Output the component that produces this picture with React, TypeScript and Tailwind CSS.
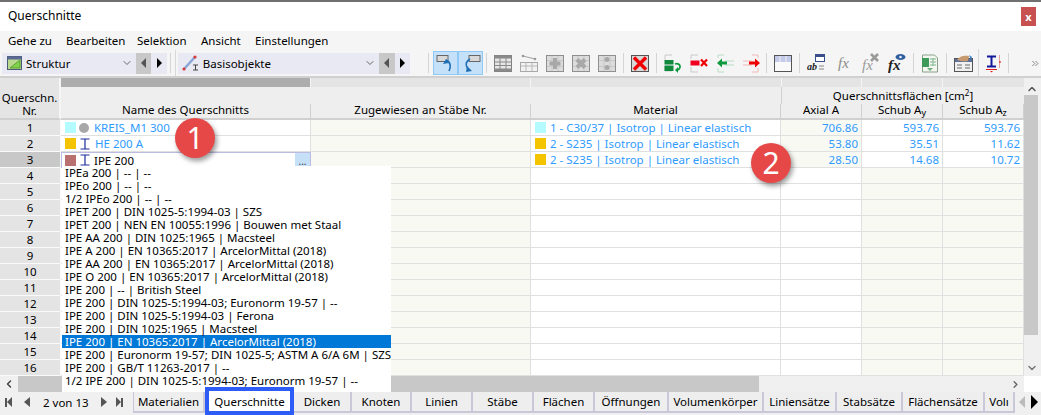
import type { ReactNode } from "react";
import { ChevronDown, ChevronUp, ChevronLeft, ChevronRight, ChevronsRight } from "lucide-react";

const font = { fontFamily: '"Noto Sans", "Open Sans", sans-serif' };

const rows = [
  { nr: 1, name: "KREIS_M1 300", color: "bg-[#b3fbff]", shape: "circle", mat: "1 - C30/37 | Isotrop | Linear elastisch", matColor: "bg-[#b3fbff]", a: "706.86", ay: "593.76", az: "593.76" },
  { nr: 2, name: "HE 200 A", color: "bg-[#f5c400]", shape: "beam", mat: "2 - S235 | Isotrop | Linear elastisch", matColor: "bg-[#f5c400]", a: "53.80", ay: "35.51", az: "11.62" },
  { nr: 3, name: "IPE 200", color: "bg-[#b87070]", shape: "beam", mat: "2 - S235 | Isotrop | Linear elastisch", matColor: "bg-[#f5c400]", a: "28.50", ay: "14.68", az: "10.72" },
];

const dropdownItems = [
  "IPEa 200 | -- | --",
  "IPEo 200 | -- | --",
  "1/2 IPEo 200 | -- | --",
  "IPET 200 | DIN 1025-5:1994-03 | SZS",
  "IPET 200 | NEN EN 10055:1996 | Bouwen met Staal",
  "IPE AA 200 | DIN 1025:1965 | Macsteel",
  "IPE A 200 | EN 10365:2017 | ArcelorMittal (2018)",
  "IPE AA 200 | EN 10365:2017 | ArcelorMittal (2018)",
  "IPE O 200 | EN 10365:2017 | ArcelorMittal (2018)",
  "IPE 200 | -- | British Steel",
  "IPE 200 | DIN 1025-5:1994-03; Euronorm 19-57 | --",
  "IPE 200 | DIN 1025-5:1994-03 | Ferona",
  "IPE 200 | DIN 1025:1965 | Macsteel",
  "IPE 200 | EN 10365:2017 | ArcelorMittal (2018)",
  "IPE 200 | Euronorm 19-57; DIN 1025-5; ASTM A 6/A 6M | SZS",
  "IPE 200 | GB/T 11263-2017 | --",
  "1/2 IPE 200 | DIN 1025-5:1994-03; Euronorm 19-57 | --",
];

const tabs = [
  { label: "Materialien", w: "w-[72px]" },
  { label: "Querschnitte", w: "w-[89px]", active: true },
  { label: "Dicken", w: "w-[58px]" },
  { label: "Knoten", w: "w-[60px]" },
  { label: "Linien", w: "w-[61px]" },
  { label: "Stäbe", w: "w-[61px]" },
  { label: "Flächen", w: "w-[61px]" },
  { label: "Öffnungen", w: "w-[74px]" },
  { label: "Volumenkörper", w: "w-[95px]" },
  { label: "Liniensätze", w: "w-[73px]" },
  { label: "Stabsätze", w: "w-[66px]" },
  { label: "Flächensätze", w: "w-[82px]" },
  { label: "Volı", w: "w-[30px]" },
];

// kleine Toolbar-Symbole
function Icon({ children, w = 18 }: { children: ReactNode; w?: number }) {
  return (
    <svg width={w} height="20" viewBox={`0 0 ${w} 20`} className="shrink-0">
      {children}
    </svg>
  );
}

function GrayTile({ children }: { children?: ReactNode }) {
  return (
    <Icon>
      <rect x="0.5" y="2.5" width="17" height="16" fill="#dcdcdc" stroke="#8f8f8f" />
      <path d="M1 7.5h16M1 13.5h16M6 3v15M12 3v15" stroke="#c8c8c8" />
      {children}
    </Icon>
  );
}

function Beam({ color = "#1d2d9c" }: { color?: string }) {
  return (
    <svg width="10" height="12" viewBox="0 0 10 12" className="shrink-0">
      <path d="M0.5 1h9M0.5 11h9M5 1v10" stroke={color} strokeWidth="1.2" fill="none" />
    </svg>
  );
}

function Sep() {
  return <div className="h-[20px] w-px shrink-0 bg-[#d4d4d4]" />;
}

function ArrowBtn({ dir, active }: { dir: "l" | "r"; active?: boolean }) {
  return (
    <div className={`flex h-[21px] w-[16px] items-center justify-center ${active ? "bg-[#c8c8c8]" : "bg-[#e9e9f3]"}`}>
      <div
        className={
          dir === "l"
            ? "h-0 w-0 border-y-[5px] border-r-[5px] border-y-transparent border-r-[#555555]"
            : "h-0 w-0 border-y-[5px] border-l-[5px] border-y-transparent border-l-black"
        }
      />
    </div>
  );
}

function Toolbar() {
  return (
    <div className="flex h-[28px] items-center border-b-2 border-[#d0d0d0] bg-[#f5f5f5] pl-[2px]">
      <div className="flex h-[21px] w-[139px] items-center bg-[#e9e9f3] pl-[5px]">
        <Icon w={15}>
          <rect x="0.5" y="3.5" width="14" height="13" fill="#b9d98f" stroke="#4c5a7a" />
          <rect x="0.5" y="3.5" width="14" height="3" fill="#5a6a94" />
          <path d="M3 15 L13 7 V15 Z" fill="#7fd44a" stroke="#5c9e35" />
        </Icon>
        <span className="ml-[4px] text-[11.5px] text-black">Struktur</span>
        <ChevronDown className="ml-auto mr-[3px] text-[#666666]" size={12} />
      </div>
      <ArrowBtn dir="l" active />
      <ArrowBtn dir="r" />
      <div className="ml-[3px] h-[20px] w-px bg-[#d4d4d4]" />
      <div className="ml-[4px] h-[26px] w-px bg-[#d8d8d8]" />
      <div className="ml-[2px] flex h-[21px] w-[209px] items-center bg-[#e9e9f3] pl-[4px]">
        <Icon>
          <path d="M2 16 L13 4" stroke="#8aa6d6" strokeWidth="2.5" />
          <circle cx="2" cy="16" r="1.6" fill="#d83a3a" />
          <circle cx="13" cy="4" r="1.6" fill="#d83a3a" />
          <path d="M11 12h5M11 17h5M13.5 12v5" stroke="#444444" fill="none" />
        </Icon>
        <span className="ml-[3px] text-[11.5px] text-black">Basisobjekte</span>
        <ChevronDown className="ml-auto mr-[3px] text-[#666666]" size={12} />
      </div>
      <ArrowBtn dir="l" active />
      <ArrowBtn dir="r" />
      <div className="ml-[2px] w-[17px]" />
      <Sep />
      <div className="ml-[4px] flex h-[24px] w-[26px] items-center justify-center border border-[#90c8f6] bg-[#c5e1f9]">
        <Icon w={20}>
          <rect x="1" y="2.5" width="11" height="6" fill="#d8d8d8" stroke="#666666" />
          <path d="M10 7 C15 9 15 14 13 18" stroke="#1f6fb5" strokeWidth="1.6" fill="none" />
          <path d="M7 11 L10 6 L13 10 Z" fill="#1f6fb5" />
        </Icon>
      </div>
      <div className="flex h-[24px] w-[26px] items-center justify-center border border-[#90c8f6] bg-[#c5e1f9]">
        <Icon w={20}>
          <rect x="8" y="2.5" width="11" height="6" fill="#d8d8d8" stroke="#666666" />
          <path d="M9 6 C4 9 4 13 8 17" stroke="#1f6fb5" strokeWidth="1.6" fill="none" />
          <path d="M6 13 L11 18 L5 19 Z" fill="#1f6fb5" />
        </Icon>
      </div>
      <div className="ml-[3px]" />
      <Sep />
      <div className="ml-[7px] flex items-center gap-[8px]">
        <Icon>
          <rect x="0.5" y="2.5" width="17" height="16" fill="#e6e6e6" stroke="#808080" />
          <rect x="0.5" y="2.5" width="17" height="3" fill="#8a8a8a" />
          <rect x="0.5" y="15.5" width="17" height="3" fill="#8a8a8a" />
          <path d="M1 9h16M1 12.5h16M6 3v15M12 3v15" stroke="#8a8a8a" />
        </Icon>
        <Icon>
          <rect x="0.5" y="9.5" width="17" height="9" fill="#f2f2f2" stroke="#a8a8a8" />
          <path d="M1 13h16M6 10v8M12 10v8" stroke="#b8b8b8" />
          <path d="M3 3 L15 6" stroke="#a0a0a0" />
          <circle cx="3" cy="3" r="1.3" fill="#999999" />
          <circle cx="15" cy="6" r="1.3" fill="#999999" />
        </Icon>
        <GrayTile>
          <path d="M9 5v11M3.5 10.500h11" stroke="#a8a8a8" strokeWidth="4" />
        </GrayTile>
        <GrayTile>
          <path d="M5 6.500l8 8M13 6.500l-8 8" stroke="#a8a8a8" strokeWidth="4" />
        </GrayTile>
        <GrayTile>
          <circle cx="9" cy="6.500" r="2.500" fill="#a8a8a8" />
          <circle cx="9" cy="14.500" r="2.500" fill="#a8a8a8" />
        </GrayTile>
      </div>
      <div className="ml-[7px]" />
      <Sep />
      <div className="ml-[7px] flex items-center">
        <Icon>
          <rect x="0.500" y="2.500" width="17" height="16" fill="#d8d8d8" stroke="#555555" />
          <path d="M3 4.500 L15 16.500 M15 4.500 L3 16.500" stroke="#f00000" strokeWidth="3.400" />
        </Icon>
      </div>
      <div className="ml-[7px]" />
      <Sep />
      <div className="ml-[7px] flex items-center gap-[8px]">
        <Icon>
          <path d="M1 8V2h7M1 13v5h7" stroke="#c8c8c8" fill="none" />
          <rect x="0.500" y="7" width="9" height="4.500" fill="#0f8a3c" />
          <rect x="0.500" y="12.500" width="9" height="5.500" fill="#0f8a3c" />
          <path d="M11 11 C17 9 18 17 12 17" stroke="#0f9a40" strokeWidth="1.800" fill="none" />
          <path d="M14 14 L11 17 L14 20 Z" fill="#0f9a40" />
        </Icon>
        <Icon>
          <path d="M1 6V2h7M1 14v5h7" stroke="#c8c8c8" fill="none" />
          <rect x="0.500" y="7.500" width="9" height="5" fill="#f00020" />
          <path d="M11 6.500 L17 13 M17 6.500 L11 13" stroke="#f00000" strokeWidth="2.200" />
        </Icon>
        <Icon>
          <path d="M2 5V2h6M2 15v4h6M9 8h9M9 12h9" stroke="#b8dcc4" fill="none" />
          <path d="M1 10 L6 5.500V8.500H11V11.500H6V14.500Z" fill="#0f9a40" />
        </Icon>
        <Icon>
          <path d="M1 8h9M1 12h9M16 5V2h-6M16 15v4h-6" stroke="#f0b8b8" fill="none" />
          <path d="M18 10 L13 5.500V8.500H7V11.500H13V14.500Z" fill="#f00000" />
        </Icon>
      </div>
      <div className="ml-[6px]" />
      <Sep />
      <div className="ml-[7px]">
        <Icon>
          <rect x="0.500" y="2.500" width="17" height="16" fill="#fafafa" stroke="#555555" />
          <rect x="1" y="3" width="16" height="6" fill="#c4cbea" />
          <path d="M6 3v6M12 3v6" stroke="#f0f0f0" />
        </Icon>
      </div>
      <div className="ml-[7px]" />
      <Sep />
      <div className="ml-[7px]">
        <Icon w={20}>
          <rect x="8.500" y="1.500" width="9" height="7" fill="#fff" stroke="#3a4e8c" />
          <rect x="8.500" y="1.500" width="9" height="2.500" fill="#3a4e8c" />
          <text x="0" y="17" fontFamily="Liberation Serif" fontStyle="italic" fontWeight="700" fontSize="10" fill="#222222">ab</text>
          <path d="M12 13h5M12 16h5" stroke="#888888" />
        </Icon>
      </div>
      <div className="ml-[9px] flex items-center gap-[8px]">
        <Icon>
          <text x="2" y="15" fontFamily="Liberation Serif" fontStyle="italic" fontSize="15" fill="#8a8a8a">fx</text>
        </Icon>
        <Icon>
          <text x="0" y="17" fontFamily="Liberation Serif" fontStyle="italic" fontSize="15" fill="#9a9a9a">fx</text>
          <path d="M9 1l7 7M16 1l-7 7" stroke="#9a9a9a" strokeWidth="2.600" />
        </Icon>
        <Icon>
          <text x="0" y="17" fontFamily="Liberation Serif" fontStyle="italic" fontWeight="700" fontSize="15" fill="#222222">fx</text>
          <ellipse cx="12.500" cy="4" rx="5" ry="3" fill="#2f5f9e" />
          <circle cx="12.500" cy="4" r="1.300" fill="#e8eefa" />
        </Icon>
      </div>
      <div className="ml-[7px]" />
      <Sep />
      <div className="ml-[7px]">
        <Icon>
          <path d="M1.500 2h12l3 3v14h-15z" fill="#f4f6f0" stroke="#8aa08a" />
          <rect x="1" y="5" width="7" height="9" fill="#3f9a5a" />
          <path d="M9 6h6M9 9h6M9 12h6M12 5v8" stroke="#7fb88f" />
          <path d="M6 15h6l-3 3z" fill="#6fae80" />
        </Icon>
      </div>
      <div className="ml-[7px]" />
      <Sep />
      <div className="ml-[7px]">
        <Icon w={19}>
          <rect x="0.500" y="5.500" width="18" height="13" fill="#f0f0f0" stroke="#555555" />
          <rect x="1" y="6" width="17" height="3" fill="#5a6f9a" />
          <path d="M3 12h5M3 15h5M11 12h5M11 15h5" stroke="#6a6a6a" />
          <path d="M3 7 C5 3 11 2 15 3 L14 8 C10 9 6 8 3 7Z" fill="#c89a70" />
          <path d="M15 2l3 2-1 3z" fill="#3a86d0" />
        </Icon>
      </div>
      <div className="ml-[5px] h-[28px] w-px bg-[#d8d8d8]" />
      <div className="ml-[6px]">
        <Icon>
          <path d="M2 3.500h9M2 13.500h9M6.500 3.500v10" stroke="#14189c" strokeWidth="2" fill="none" />
          <path d="M1 16.500h11" stroke="#e02020" />
          <path d="M5 18h3l-1.500 1.500z" fill="#e02020" />
          <path d="M14.500 2v13" stroke="#e8a0a0" />
          <path d="M15 8v2" stroke="#e02020" strokeWidth="1.200" />
        </Icon>
      </div>
      <div className="ml-[5px]" />
      <Sep />
      <ChevronsRight className="ml-[21px] text-[#777777]" size={11} />
    </div>
  );
}

const cell = "h-4 border-b border-r border-[#e0e0e0]";

function Rows() {
  return (
    <>
      {Array.from({ length: 16 }, (_, i) => {
        const r = rows[i];
        const selected = i === 2;
        return (
          <div key={i} className="contents">
            <div className={`flex h-4 items-center justify-center border-b border-r border-[#fafafa] text-[11.5px] text-black ${selected ? "bg-[#c8c8c8]" : "bg-[#e4e4e4]"}`}>
              {i + 1}
            </div>
            <div
              className={`flex items-center ${selected ? "h-4 border border-[#bcbce2] pl-[3px]" : `${cell} pl-[4px]`}`}
            >
              {r && (
                <>
                  <div className={`h-[11px] w-[11px] shrink-0 ${r.color}`} />
                  {r.shape === "circle" ? (
                    <div className="ml-[3px] h-[10px] w-[10px] shrink-0 rounded-full bg-[#a8a8a8]" />
                  ) : (
                    <div className="ml-[4px]">
                      <Beam />
                    </div>
                  )}
                  <span className={`text-[11.5px] ${selected ? "ml-[4px] text-black" : "ml-[5px] text-[#2f9bff]"}`}>{r.name}</span>
                  {selected && (
                    <div className="ml-auto flex h-[14px] w-[15px] items-end justify-center bg-[#c5e0f7] text-[10px] leading-[11px] text-[#444444]">
                      ...
                    </div>
                  )}
                </>
              )}
            </div>
            <div className={`${cell} bg-[#f8f9f3]`} />
            <div className={`flex items-center ${cell} pl-[4px]`}>
              {r && (
                <>
                  <div className={`h-[11px] w-[11px] shrink-0 ${r.matColor}`} />
                  <span className="ml-[4px] text-[11.5px] text-[#2f9bff]">{r.mat}</span>
                </>
              )}
            </div>
            <div className={`flex items-center justify-end pr-[3px] text-[11.5px] text-[#2f9bff] ${cell} ${r ? "bg-[#f8f9f3]" : ""}`}>{r?.a}</div>
            <div className={`flex items-center justify-end pr-[3px] text-[11.5px] text-[#2f9bff] ${cell} ${r ? "" : "bg-[#f8f9f3]"}`}>{r?.ay}</div>
            <div className={`flex items-center justify-end pr-[3px] text-[11.5px] text-[#2f9bff] ${cell} ${r ? "" : "bg-[#f8f9f3]"}`}>{r?.az}</div>
          </div>
        );
      })}
    </>
  );
}

function GridHeader() {
  const sub = "flex items-end justify-center border-r border-[#d0d0d0] bg-[#eeeeee] text-[11.5px] text-black";
  return (
    <>
      <div className="border-r-2 border-[#f5f5f5] bg-[#e4e4e4]" />
      <div className="border-r border-[#f5f5f5] bg-[#adadad]" />
      <div className="border-r border-[#f5f5f5] bg-[#e4e4e4]" />
      <div className="bg-[#e4e4e4]" />
      <div className="border-x border-[#f5f5f5] bg-[#e4e4e4]" />
      <div className="border-r border-[#f5f5f5] bg-[#e4e4e4]" />
      <div className="bg-[#e4e4e4]" />

      <div className="row-span-2 flex flex-col items-center justify-end border-b-2 border-r-2 border-b-[#d0d0d0] border-r-[#f5f5f5] bg-[#e4e4e4] text-[11.5px] leading-[13px] text-black">
        <span>Querschn.</span>
        <span className="mb-[1px]">Nr.</span>
      </div>
      <div className="col-span-3 bg-[#eeeeee]" />
      <div className="col-span-3 flex items-center justify-center border-l border-[#d0d0d0] bg-[#eeeeee] text-[11.5px] text-black">
        <span>
          Querschnittsflächen [cm<sup className="text-[8px]">2</sup>]
        </span>
      </div>
      <div className={`${sub} border-b-2 border-b-[#d0d0d0]`}>Name des Querschnitts</div>
      <div className={`${sub} border-b-2 border-b-[#d0d0d0]`}>Zugewiesen an Stäbe Nr.</div>
      <div className={`${sub} border-b-2 border-b-[#d0d0d0]`}>Material</div>
      <div className={`${sub} border-b-2 border-b-[#d0d0d0]`}>Axial A</div>
      <div className={`${sub} border-b-2 border-b-[#d0d0d0]`}>
        <span>
          Schub A<sub className="text-[9px]">y</sub>
        </span>
      </div>
      <div className={`${sub} border-b-2 border-b-[#d0d0d0]`}>
        <span>
          Schub A<sub className="text-[9px]">z</sub>
        </span>
      </div>
    </>
  );
}

function Badge({ n, className }: { n: number; className: string }) {
  return (
    <div className={`absolute z-20 flex h-[40px] w-[40px] items-center justify-center rounded-full bg-[#e64848] text-[30px] leading-none text-white shadow-[2px_3px_5px_rgba(0,0,0,0.4)] ${className}`}>
      {n}
    </div>
  );
}

export default function App() {
  return (
    <div className="flex h-[415px] w-[1041px] flex-col overflow-hidden bg-white" style={font}>
      {/* Titel */}
      <div className="flex h-[31px] items-center border-t-2 border-[#707070] pl-2 pr-[5px]">
        <span className="text-[12px] text-black">Querschnitte</span>
        <div className="ml-auto flex h-[19px] w-[15px] items-center justify-center bg-[#c75050] text-[11px] font-bold leading-none text-white">x</div>
      </div>

      {/* Menü */}
      <div className="flex h-[20px] items-center bg-[#f5f5f5] pl-2 text-[11.5px] text-black">
        <span className="w-[58px]">Gehe zu</span>
        <span className="w-[71px]">Bearbeiten</span>
        <span className="w-[64px]">Selektion</span>
        <span className="w-[54px]">Ansicht</span>
        <span>Einstellungen</span>
      </div>

      <Toolbar />

      {/* Tabelle */}
      <div className="relative flex">
        <div className="grid w-[1024px] grid-cols-[61px_250px_220px_250px_81px_81px_81px] grid-rows-[9px_17px_16px_repeat(16,16px)]">
          <GridHeader />
          <Rows />
        </div>

        <div className="flex h-[298px] w-[17px] flex-col items-start bg-[#f0f0f0]">
          <div className="flex h-[17px] w-[15px] items-end justify-center">
            <ChevronUp className="text-[#555555]" size={12} strokeWidth={3} />
          </div>
          <div className="h-[240px] w-[14px] bg-[#c8c8c8]" />
          <div className="mt-auto flex h-[17px] w-[15px] items-center justify-center">
            <ChevronDown className="text-[#777777]" size={12} strokeWidth={3} />
          </div>
        </div>

        <Badge n={1} className="left-[175px] top-[40px]" />
        <Badge n={2} className="left-[751px] top-[65px]" />

        <div className="absolute left-[62px] top-[88px] z-10 h-[226px] w-[329px] bg-white text-[11.5px] text-black">
          {dropdownItems.map((item, i) => (
            <div
              key={i}
              className={`flex h-[13px] items-center whitespace-nowrap pl-[3px] ${i === 13 ? "bg-[#0078d7] text-white" : ""}`}
            >
              {item}
            </div>
          ))}
        </div>
      </div>

      {/* horizontale Bildlaufleiste */}
      <div className="flex h-[16px] w-[1024px] bg-[#f0f0f0]">
        <div className="flex w-[18px] items-center justify-center">
          <ChevronLeft className="text-[#444444]" size={12} strokeWidth={3} />
        </div>
        <div className="w-[741px] bg-[#c8c8c8]" />
        <div className="ml-auto flex w-[18px] items-center justify-center">
          <ChevronRight className="text-[#666666]" size={11} strokeWidth={3} />
        </div>
      </div>

      {/* Register */}
      <div className="flex flex-1 bg-[#f0f0f0] text-[11.5px] text-black">
        <div className="flex h-[21px] w-[133px] items-center">
          <div className="ml-[5px] flex w-[12px] items-center">
            <div className="h-[9px] w-[2px] bg-[#555555]" />
            <div className="h-0 w-0 border-y-[5px] border-r-[5px] border-y-transparent border-r-[#555555]" />
          </div>
          <div className="ml-[7px] h-0 w-0 border-y-[5px] border-r-[6px] border-y-transparent border-r-[#555555]" />
          <span className="ml-[13px] w-[58px] text-[11.5px]">2 von 13</span>
          <div className="h-0 w-0 border-y-[5px] border-l-[6px] border-y-transparent border-l-[#555555]" />
          <div className="ml-[9px] flex items-center">
            <div className="h-0 w-0 border-y-[5px] border-l-[5px] border-y-transparent border-l-[#555555]" />
            <div className="h-[9px] w-[2px] bg-[#555555]" />
          </div>
        </div>
        {tabs.map((t) =>
          t.active ? (
            <div
              key={t.label}
              className={`relative z-30 -mt-[5px] flex h-[28px] items-center justify-center border-[4px] border-[#2d5cf6] bg-white pt-[1px] ${t.w}`}
            >
              {t.label}
            </div>
          ) : (
            <div
              key={t.label}
              className={`flex h-[21px] shrink-0 items-center justify-center overflow-hidden border-b-2 border-r-2 border-[#c8c8d8] bg-[#eeeeee] ${t.label === "Materialien" ? "border-l" : ""} ${t.w}`}
            >
              {t.label}
            </div>
          )
        )}
        <div className="flex h-[21px] flex-1 items-center justify-center gap-[6px]">
          <div className="h-0 w-0 border-y-[6px] border-r-[6px] border-y-transparent border-r-[#bbbbbb]" />
          <div className="h-0 w-0 border-y-[7px] border-l-[7px] border-y-transparent border-l-black" />
        </div>
      </div>
    </div>
  );
}
